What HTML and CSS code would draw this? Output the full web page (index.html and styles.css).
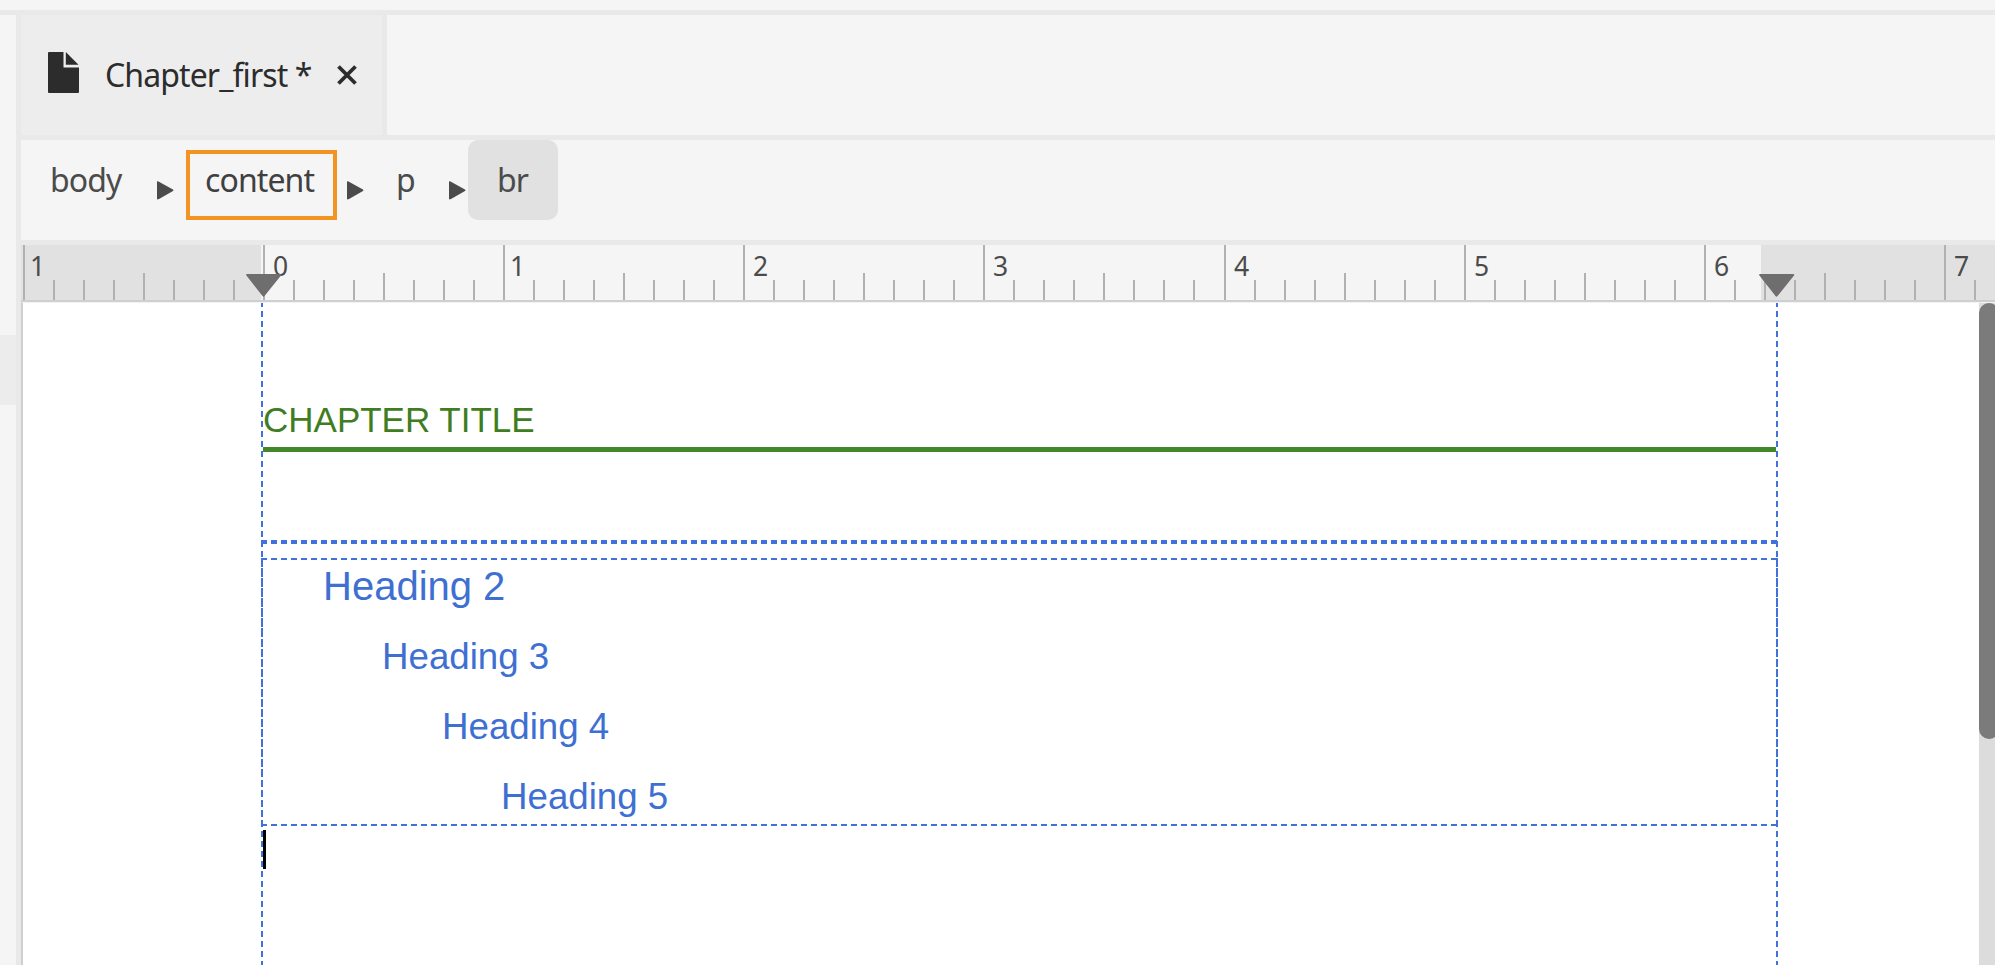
FILE: index.html
```html
<!DOCTYPE html>
<html lang="en">
<head>
<meta charset="utf-8">
<title>Chapter_first</title>
<link rel="stylesheet" href="styles.css">
</head>
<body>
<div class="topbar"></div>
<div class="app">
  <aside class="rail"><div class="rail-item"></div></aside>
  <main class="editor">
    <header class="tabs">
      <div class="tab">
        <svg class="doc-icon" width="31" height="41" viewBox="0 0 31 41"><path d="M1 0H15.500V15.500H31V40Q31 41 30 41H1Q0 41 0 40V1Q0 0 1 0Z"/><path d="M17.800 0L30.500 12.800H17.800Z"/></svg>
        <span class="tab-name">Chapter_first *</span>
        <svg class="close" width="20" height="20" viewBox="0 0 20 20"><path d="M1.500 1.500L18.500 18.500M18.500 1.500L1.500 18.500"/></svg>
      </div>
    </header>
    <nav class="crumbs">
      <span class="crumb c-body">body</span>
      <svg class="arrow a1" width="17" height="19" viewBox="0 0 17 19"><path d="M0 1Q0 0 1 .3L16 8.500Q17 9.200 16 10L2 18Q0 19 0 17.500Z"/></svg>
      <span class="crumb c-content">content</span>
      <svg class="arrow a2" width="17" height="19" viewBox="0 0 17 19"><path d="M0 1Q0 0 1 .3L16 8.500Q17 9.200 16 10L2 18Q0 19 0 17.500Z"/></svg>
      <span class="crumb c-p">p</span>
      <svg class="arrow a3" width="17" height="19" viewBox="0 0 17 19"><path d="M0 1Q0 0 1 .3L16 8.500Q17 9.200 16 10L2 18Q0 19 0 17.500Z"/></svg>
      <span class="crumb c-br">br</span>
    </nav>
    <div class="ruler">
      <div class="inch one">1</div><div class="inch">0</div><div class="inch one">1</div><div class="inch">2</div><div class="inch wide">3</div><div class="inch">4</div><div class="inch">5</div><div class="inch">6</div><div class="inch">7</div>
      <svg class="marker m-left" width="36" height="24" viewBox="0 0 36 24"><path d="M0 1Q0 0 1 0H34Q36 0 35 1.500L18.500 22Q17.500 23.500 16.500 22Z"/></svg>
      <svg class="marker m-right" width="36" height="24" viewBox="0 0 36 24"><path d="M0 1Q0 0 1 0H34Q36 0 35 1.500L18.500 22Q17.500 23.500 16.500 22Z"/></svg>
    </div>
    <section class="canvas">
      <article class="page">
        <h1>CHAPTER TITLE</h1>
        <div class="thick-dash"></div>
        <div class="toc">
          <p class="h2">Heading 2</p>
          <p class="h3">Heading 3</p>
          <p class="h4">Heading 4</p>
          <p class="h5">Heading 5</p>
        </div>
        <div class="caret"></div>
      </article>
      <div class="scroll"><div class="thumb"></div></div>
    </section>
  </main>
</div>
</body>
</html>
```

FILE: styles.css
```css
* { box-sizing: border-box; }
body { margin: 0; width: 1995px; height: 965px; overflow: hidden; background: #f5f5f5; font-family: "Noto Sans", sans-serif; color: #4b4b4b; }
.topbar { height: 15px; border-bottom: 5px solid #e9e9e9; }
.app { display: flex; height: 950px; }
.rail { width: 21px; border-right: 5px solid #e9e9e9; padding-top: 320px; }
.rail-item { height: 70px; background: #ececec; }
.editor { width: 1974px; display: flex; flex-direction: column; }
.tabs { height: 125px; border-bottom: 5px solid #e9e9e9; display: flex; }
.tab { width: 366px; background: #ededed; border-right: 5px solid #e9e9e9; display: flex; align-items: flex-start; padding-left: 27px; color: #2c2c2c; }
.doc-icon { margin-top: 37px; fill: #2c2c2c; flex: none; }
.tab-name { margin: 38px 0 0 26px; width: 232px; font-size: 32px; letter-spacing: -0.9px; line-height: 44px; white-space: nowrap; flex: none; }
.close { margin-top: 50px; fill: none; stroke: #2c2c2c; stroke-width: 3.800; flex: none; }
.crumbs { height: 105px; border-bottom: 5px solid #e9e9e9; display: flex; align-items: flex-start; font-size: 32px; letter-spacing: -0.9px; line-height: 44px; }
.crumb { white-space: nowrap; flex: none; }
.arrow { fill: #4b4b4b; margin-top: 41px; flex: none; }
.c-body { margin: 18px 0 0 29px; width: 107px; }
.c-content { margin: 10px 0 0 12px; width: 151px; height: 70px; border: 4px solid #f29423; padding: 4px 0 0 15px; color: #404040; }
.a2 { margin-left: 10px; }
.c-p { margin: 18px 0 0 32px; width: 53px; }
.c-br { margin-left: 2px; width: 90px; height: 80px; border-radius: 10px; background: #e1e1e1; padding: 18px 0 0 29px; }
.ruler { position: relative; height: 57px; padding-left: 2px; display: flex; overflow: hidden; border-bottom: 2px solid #cfcfcf; background: linear-gradient(#e1e1e1, #e1e1e1) 0 0 / 240px 100% no-repeat, linear-gradient(#e1e1e1, #e1e1e1) 1740px 0 / 234px 100% no-repeat; }
.inch { flex: none; width: 240px; height: 55px; border-left: 2px solid #b1b1b1; padding: 4px 0 0 8px; font-size: 26.500px; line-height: 34px; background: linear-gradient(#b1b1b1, #b1b1b1) 118px 28px / 2px 27px no-repeat, repeating-linear-gradient(to right, transparent 0 28px, #b1b1b1 28px 30px) 0 35px / 238px 20px no-repeat; }
.inch.one { padding-left: 5px; }
.inch.wide { width: 241px; }
.marker { position: absolute; top: 29px; fill: #6e6e6e; }
.m-left { left: 225px; }
.m-right { left: 1738px; }
.canvas { flex: 1; display: flex; justify-content: space-between; background: #fff; border-left: 2px solid #cfcfcf; border-top: 1px solid #f3f3f3; }
.page { margin-left: 238px; width: 1517px; height: 662px; background: repeating-linear-gradient(#3f72df 0 6px, transparent 6px 10px) 0 -2px / 2px 100%, repeating-linear-gradient(#3f72df 0 6px, transparent 6px 10px) 100% -2px / 2px 100%; background-repeat: repeat-y; font-family: "Liberation Sans", sans-serif; color: #3e70d2; }
h1 { margin: 0 2px; height: 149px; padding-top: 96px; border-bottom: 5px solid #42872a; font-size: 35px; line-height: 42px; font-weight: 400; color: #3f7d22; }
.thick-dash { height: 4px; margin-top: 88px; background: repeating-linear-gradient(to right, #3f72df 0 6px, transparent 6px 10px); }
.toc { margin-top: 14px; height: 268px; background: repeating-linear-gradient(to right, #3f72df 0 6px, transparent 6px 10px) 0 0 / 100% 2px no-repeat, repeating-linear-gradient(to right, #3f72df 0 6px, transparent 6px 10px) 0 100% / 100% 2px no-repeat, repeating-linear-gradient(#3f72df 0 6px, transparent 6px 10.070px) 0 0 / 2px 100% no-repeat, repeating-linear-gradient(#3f72df 0 6px, transparent 6px 10.070px) 100% 0 / 2px 100% no-repeat; }
.toc p { margin: 0; white-space: nowrap; font-size: 36.700px; line-height: 42px; }
.toc .h2 { padding: 5px 0 0 62px; font-size: 40px; line-height: 46px; }
.toc .h3 { padding: 27px 0 0 121px; }
.toc .h4 { padding: 28px 0 0 181px; }
.toc .h5 { padding: 28px 0 0 240px; }
.caret { width: 3px; height: 39px; margin: 4px 0 0 2px; background: #000; }
.scroll { width: 16px; background: #dcdcdc; overflow: hidden; }
.thumb { width: 20px; height: 436px; border-radius: 10px; background: #7b7b7b; }
```
